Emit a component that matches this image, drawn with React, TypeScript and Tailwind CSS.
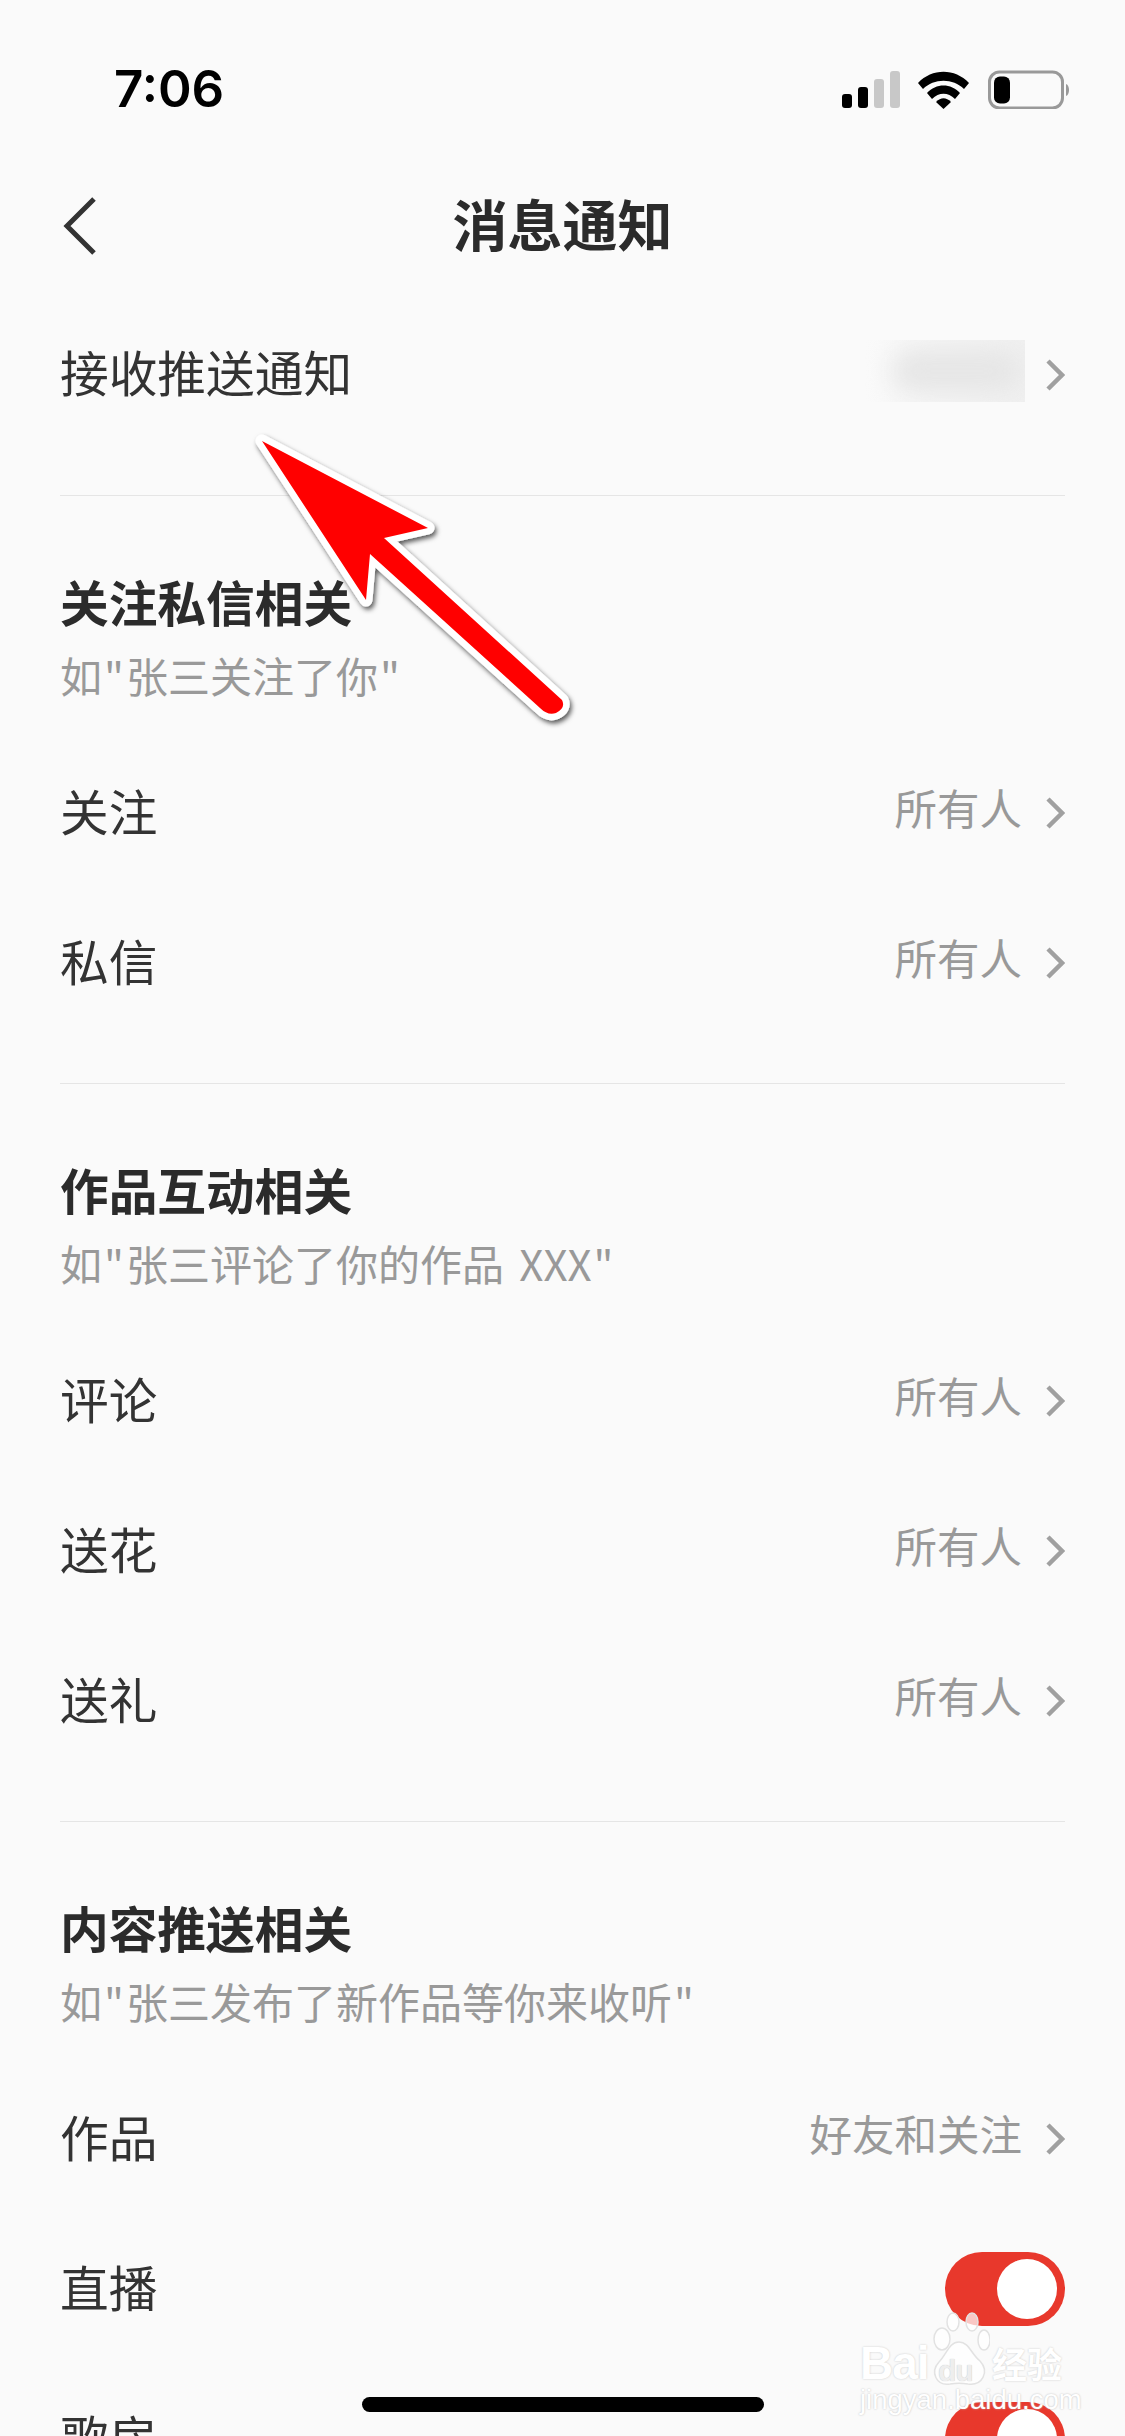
import React from "react";

const cjk = "font-['Noto_Sans_CJK_SC','Noto_Sans',sans-serif]";

const Chevron = () => (
  <svg width="20" height="32" viewBox="0 0 20 32" className="shrink-0" fill="none">
    <path d="M3 2 L17 16 L3 30" stroke="#a0a0a0" strokeWidth="4.5" strokeLinejoin="miter" />
  </svg>
);

const Toggle = () => (
  <div className="flex h-[74px] w-[120px] items-center justify-end rounded-full bg-[#e8382c] pr-2">
    <div className="h-[60px] w-[60px] rounded-full bg-white" />
  </div>
);

type RowProps = {
  label: string;
  value?: string;
  on?: boolean;
  blurred?: boolean;
};

const Row: React.FC<RowProps> = ({ label, value, on, blurred }) => (
  <div className="flex h-[150px] items-center justify-between">
    <span className={`text-[48.7px] leading-[60px] text-[#333333] ${blurred ? "pb-[9px]" : "pb-[7px]"}`}>{label}</span>
    {on ? (
      <Toggle />
    ) : (
      <div className="flex items-center gap-5">
        {blurred ? (
          <div className="mb-[8px] flex h-[62px] w-[160px] items-center justify-center overflow-hidden bg-gradient-to-r from-[#fafafa] to-[#f0f0f0]">
            <div className="h-[44px] w-[130px] translate-x-3 rounded-full bg-[#e6e6e6] blur-[12px]" />
          </div>
        ) : (
          <span className="mr-[3px] mb-[12px] text-[42.5px] leading-[60px] text-[#999999]">{value}</span>
        )}
        <Chevron />
      </div>
    )}
  </div>
);

type SectionProps = {
  title: string;
  hint: string;
  rows: RowProps[];
};

const Section: React.FC<SectionProps> = ({ title, hint, rows }) => {
  const [before, quoted] = hint.split('"');
  return (
    <section className="border-t border-[#e5e5e5] pt-[75px] pb-[45px]">
      <h2 className="text-[48.7px] leading-[60px] font-bold text-[#2b2b2b]">{title}</h2>
      <p className="mt-[14px] mb-[33px] text-[42px] leading-[60px] [word-spacing:6px] text-[#999999]">
        {before}
        <span className="mx-[2px]">"</span>
        {quoted}
        <span className="mx-[2px]">"</span>
      </p>
      {rows.map((r) => (
        <Row key={r.label} {...r} />
      ))}
    </section>
  );
};

const StatusIcons = () => (
  <svg width="232" height="40" viewBox="0 0 232 40">
    <rect x="2" y="25" width="10" height="14" rx="3" fill="#000" />
    <rect x="18" y="18" width="10" height="21" rx="3" fill="#000" />
    <rect x="34" y="10" width="10" height="29" rx="3" fill="#c8c8c8" />
    <rect x="50" y="2" width="10" height="37" rx="3" fill="#c8c8c8" />
    <path d="M78 14 C92 -1 115 -1 129 14 L124 20 C113 9 94 9 83 20 Z" fill="#000" />
    <path d="M87 24 C96 14 111 14 120 24 L115 30 C108 23 99 23 92 30 Z" fill="#000" />
    <path d="M96 33 C101 28 106 28 111 33 L103.5 40 Z" fill="#000" />
    <rect x="149.5" y="3" width="73" height="36" rx="10" fill="none" stroke="#999" strokeWidth="3" />
    <rect x="154" y="7.5" width="16" height="27" rx="6" fill="#000" />
    <path d="M226 15 C230 16 230 26 226 27 Z" fill="#999" />
  </svg>
);

const Arrow = () => (
  <svg
    className="pointer-events-none absolute top-[425px] left-[245px]"
    width="340"
    height="310"
    viewBox="245 425 340 310"
    fill="none"
  >
    <defs>
      <filter id="arrow-shadow" x="-10%" y="-10%" width="120%" height="120%">
        <feDropShadow dx="2" dy="3" stdDeviation="2.5" floodColor="#000" floodOpacity="0.65" />
      </filter>
    </defs>
    <path
      d="M262 441 L428 528 L384 538 L562 700 Q566 708 556 713 Q548 716 540 708 L370 554 L366 600 Z"
      fill="#fff"
      stroke="#fff"
      strokeWidth="13"
      strokeLinejoin="round"
      filter="url(#arrow-shadow)"
    />
    <path
      d="M262 441 L428 528 L384 538 L562 700 Q566 708 556 713 Q548 716 540 708 L370 554 L366 600 Z"
      fill="#ff0000"
    />
  </svg>
);

const Watermark = () => (
  <div className="pointer-events-none absolute top-[2312px] left-[860px] h-[100px] w-[206px] font-['Liberation_Sans',sans-serif]">
    <svg className="absolute top-0 left-[68px]" width="62" height="78" viewBox="0 0 62 78">
      <g fill="#ffffff" fillOpacity="0.72" stroke="#e2e2e2" strokeWidth="1.5">
        <ellipse cx="14" cy="27" rx="8" ry="11" />
        <ellipse cx="25" cy="10" rx="6" ry="9" />
        <ellipse cx="44" cy="10" rx="6" ry="9" />
        <ellipse cx="56" cy="28" rx="6" ry="10" />
        <path d="M31 30 C41 30 43 42 52 49 C62 60 54 74 40 72 C34 71 28 71 22 72 C8 74 2 60 11 50 C19 42 21 30 31 30 Z" />
      </g>
    </svg>
    <span className="absolute top-[26px] left-0 text-[46px] leading-[50px] font-bold tracking-[-1px] text-white [text-shadow:0_0_2px_#c4c4c4]">
      Bai
    </span>
    <span className="absolute top-[42px] left-[78px] text-[30px] leading-[34px] font-bold tracking-[-1px] text-[#eeeeee] [text-shadow:0_0_1px_#bbbbbb]">
      du
    </span>
    <span className={`absolute top-[26px] left-[132px] text-[35px] leading-[50px] font-bold text-white [text-shadow:0_0_2px_#c4c4c4] ${cjk}`}>
      经验
    </span>
    <span className="absolute top-[72px] left-0 text-[27.5px] leading-[32px] whitespace-nowrap text-white [text-shadow:0_0_2px_#bbbbbb]">
      jingyan.baidu.com
    </span>
  </div>
);

export default function App() {
  return (
    <div className={`relative h-[2436px] w-[1125px] overflow-hidden bg-[#fafafa] ${cjk}`}>
      <div className="flex h-[150px] items-start justify-between pt-[66px] pr-[53px] pl-[114px]">
        <span className="font-['Inter',sans-serif] text-[51px] leading-[46px] font-semibold text-black">7:06</span>
        <div className="pt-[3px]">
          <StatusIcons />
        </div>
      </div>

      <header className="relative flex h-[150px] items-center justify-center">
        <svg className="absolute top-[47px] left-[62px]" width="36" height="58" viewBox="0 0 36 58" fill="none">
          <path d="M32 2 L5 29 L32 56" stroke="#333333" strokeWidth="5" />
        </svg>
        <h1 className="pb-[6px] text-[55px] leading-[60px] font-bold text-[#2b2b2b]">消息通知</h1>
      </header>

      <main className="px-[60px]">
        <div className="pb-[45px]">
          <Row label="接收推送通知" blurred />
        </div>
        <Section
          title="关注私信相关"
          hint='如"张三关注了你'
          rows={[
            { label: "关注", value: "所有人" },
            { label: "私信", value: "所有人" },
          ]}
        />
        <Section
          title="作品互动相关"
          hint='如"张三评论了你的作品 XXX'
          rows={[
            { label: "评论", value: "所有人" },
            { label: "送花", value: "所有人" },
            { label: "送礼", value: "所有人" },
          ]}
        />
        <Section
          title="内容推送相关"
          hint='如"张三发布了新作品等你来收听'
          rows={[
            { label: "作品", value: "好友和关注" },
            { label: "直播", on: true },
            { label: "歌房", on: true },
          ]}
        />
      </main>

      <Arrow />
      <Watermark />
      <div className="absolute top-[2397px] left-[362px] h-[15px] w-[402px] rounded-full bg-black" />
    </div>
  );
}
